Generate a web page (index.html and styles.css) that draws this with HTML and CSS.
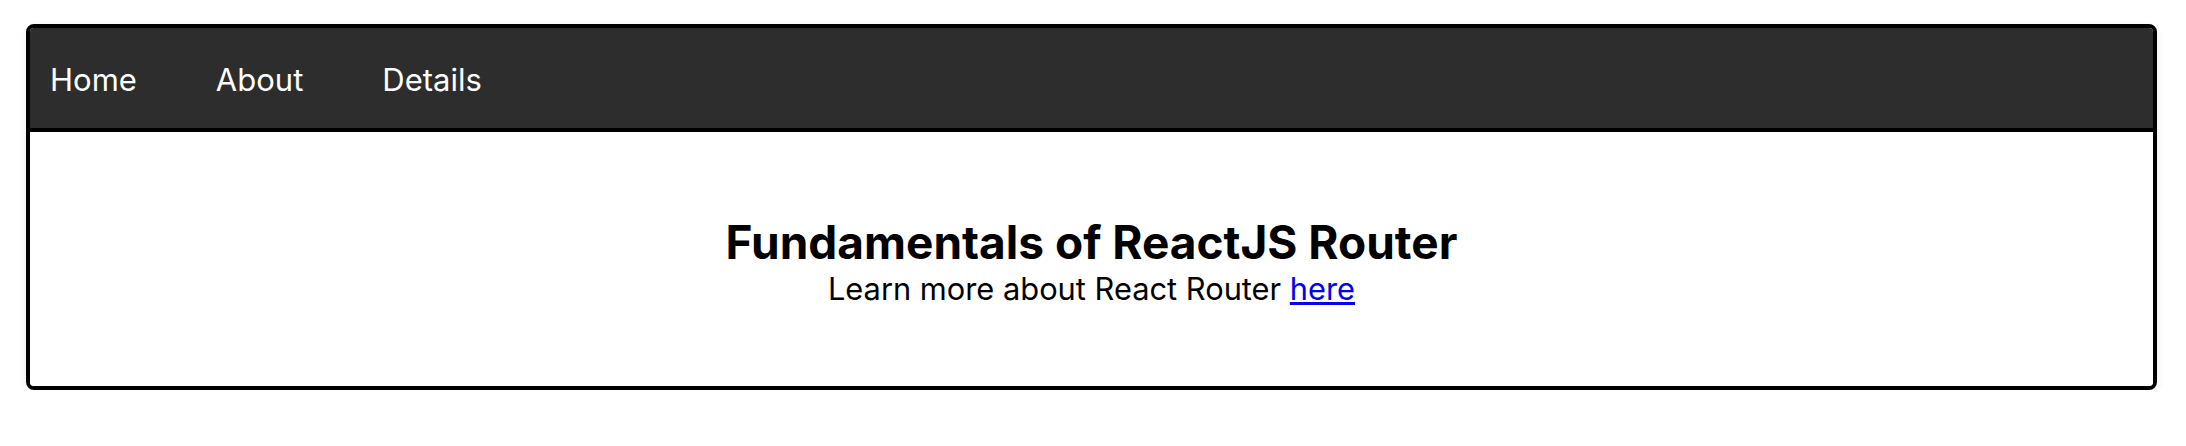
FILE: index.html
```html
<!DOCTYPE html>
<html lang="en">
<head>
<meta charset="utf-8">
<title>ReactJS Router</title>
<link rel="stylesheet" href="styles.css">
</head>
<body>
  <div class="card">
    <nav class="nav">
      <a class="nav-link" href="#">Home</a>
      <a class="nav-link" href="#">About</a>
      <a class="nav-link" href="#">Details</a>
    </nav>
    <main class="content">
      <h1 class="title">Fundamentals of ReactJS Router</h1>
      <p class="subtitle">Learn more about React Router <a class="link" href="#">here</a></p>
    </main>
  </div>
</body>
</html>
```

FILE: styles.css
```css
* { box-sizing: border-box; }

html, body {
  margin: 0;
  padding: 0;
  background: #ffffff;
}

body {
  font-family: Inter, "Liberation Sans", sans-serif;
  color: #000;
}

.card {
  margin: 24px 29px 0 26px;
  border: 4px solid #000;
  border-radius: 8px;
  overflow: hidden;
  box-shadow: 0 4px 10px rgba(0, 0, 0, 0.08);
}

.nav {
  display: flex;
  align-items: center;
  gap: 79px;
  height: 104px;
  padding: 2px 0 0 20px;
  background: #2d2d2d;
  border-bottom: 4px solid #000;
}

.nav-link {
  color: #ffffff;
  text-decoration: none;
  font-size: 31px;
  font-weight: 400;
  line-height: normal;
}

.content {
  padding: 82px 0 79px;
  text-align: center;
  background: #fff;
}

.title {
  margin: 0;
  font-size: 46px;
  font-weight: 700;
  line-height: normal;
}

.subtitle {
  margin: 0;
  font-size: 30.8px;
  line-height: normal;
}

.link {
  color: #0000ee;
  text-decoration: underline;
}
```
